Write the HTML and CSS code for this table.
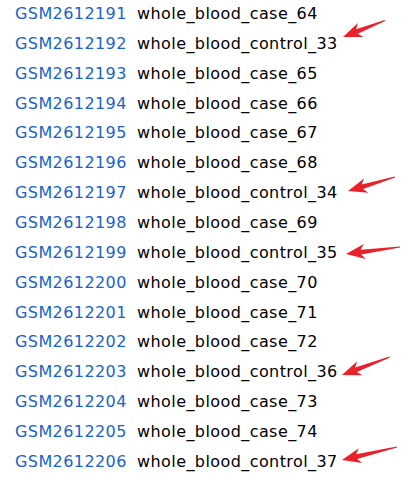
FILE: index.html
```html
<!DOCTYPE html>
<html lang="en">
<head>
    <meta charset="UTF-8">
    <title>GSM samples</title>
    <link rel="stylesheet" href="styles.css">
</head>
<body>
    <div class="page">
        <div class="samples">
            <a class="gsm">GSM2612191</a><span class="title">whole_blood_case_64</span>
            <a class="gsm">GSM2612192</a><span class="title">whole_blood_control_33</span>
            <a class="gsm">GSM2612193</a><span class="title">whole_blood_case_65</span>
            <a class="gsm">GSM2612194</a><span class="title">whole_blood_case_66</span>
            <a class="gsm">GSM2612195</a><span class="title">whole_blood_case_67</span>
            <a class="gsm">GSM2612196</a><span class="title">whole_blood_case_68</span>
            <a class="gsm">GSM2612197</a><span class="title">whole_blood_control_34</span>
            <a class="gsm">GSM2612198</a><span class="title">whole_blood_case_69</span>
            <a class="gsm">GSM2612199</a><span class="title">whole_blood_control_35</span>
            <a class="gsm">GSM2612200</a><span class="title">whole_blood_case_70</span>
            <a class="gsm">GSM2612201</a><span class="title">whole_blood_case_71</span>
            <a class="gsm">GSM2612202</a><span class="title">whole_blood_case_72</span>
            <a class="gsm">GSM2612203</a><span class="title">whole_blood_control_36</span>
            <a class="gsm">GSM2612204</a><span class="title">whole_blood_case_73</span>
            <a class="gsm">GSM2612205</a><span class="title">whole_blood_case_74</span>
            <a class="gsm">GSM2612206</a><span class="title">whole_blood_control_37</span>
        </div>

        <!-- annotation arrows drawn over the list -->
        <svg class="marks" width="413" height="480" viewBox="0 0 413 480">
            <g fill="#e8212b">
                <path transform="translate(343 37) rotate(-21.5)" d="M0 0 L19 -7.5 L15 -2.4 L45 -0.6 L45 0.6 L15 2.4 L19 7.5 Z"/>
                <path transform="translate(348 191) rotate(-16.6)" d="M0 0 L19 -7.5 L15 -2.4 L49 -0.6 L49 0.6 L15 2.4 L19 7.5 Z"/>
                <path transform="translate(346 254) rotate(-7.4)" d="M0 0 L19 -7.5 L15 -2.4 L54.5 -0.6 L54.5 0.6 L15 2.4 L19 7.5 Z"/>
                <path transform="translate(342 375) rotate(-20.6)" d="M0 0 L19 -7.5 L15 -2.4 L51 -0.6 L51 0.6 L15 2.4 L19 7.5 Z"/>
                <path transform="translate(342 460) rotate(-13.3)" d="M0 0 L19 -7.5 L15 -2.4 L56.5 -0.6 L56.5 0.6 L15 2.4 L19 7.5 Z"/>
            </g>
        </svg>
    </div>
</body>
</html>
```

FILE: styles.css
```css
body {
    margin: 0;
    background: #ffffff;
    font-family: 'DejaVu Sans', Verdana, sans-serif;
    color: #000000;
}

.page {
    position: relative;
    width: 413px;
    height: 480px;
    overflow: hidden;
}

.samples {
    display: grid;
    grid-template-columns: 122px 1fr;
    row-gap: 2.87px;
    padding-left: 15px;
    font-size: 16px;
    line-height: 27px;
    letter-spacing: 0.42px;
}

.gsm {
    color: #1a63c9;
    text-decoration: none;
}

.title {
    color: #000000;
}

.marks {
    position: absolute;
    top: 0;
    left: 0;
    pointer-events: none;
}
```
